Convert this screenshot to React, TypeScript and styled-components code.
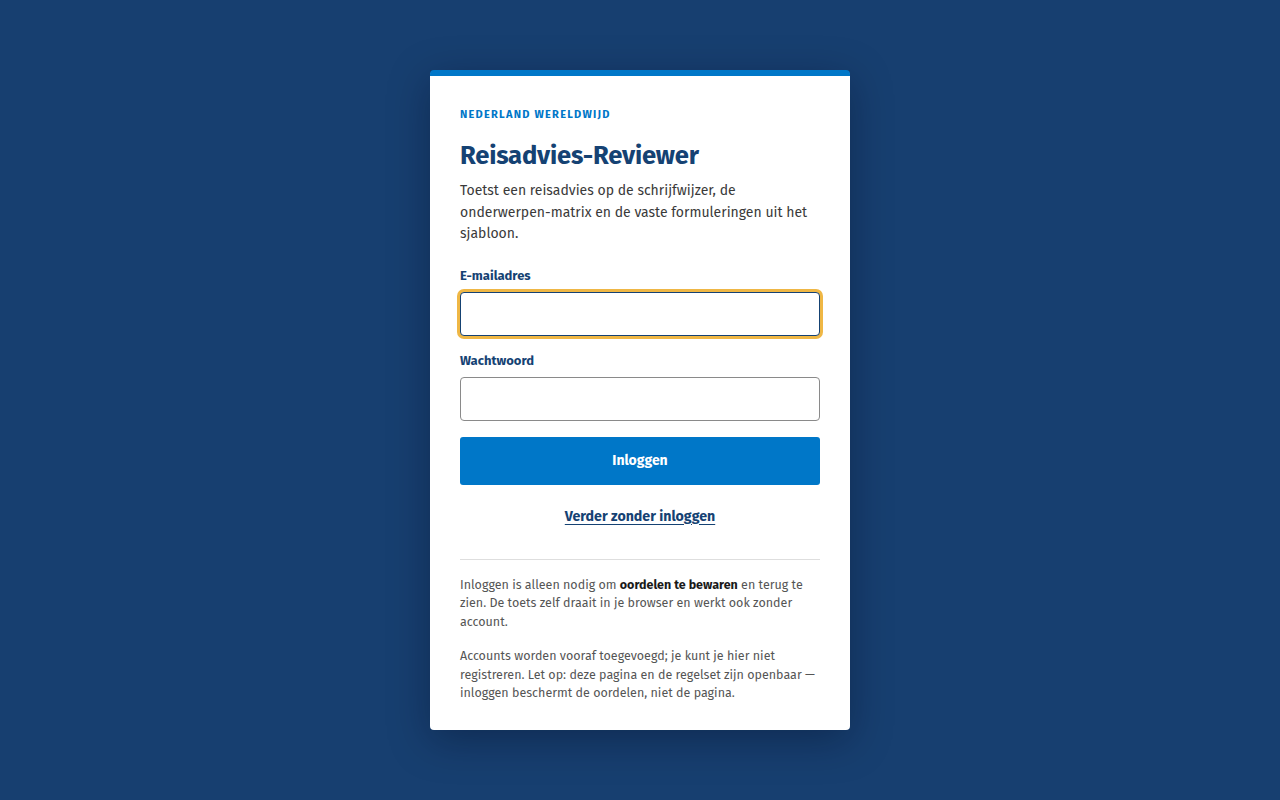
import React from "react";
import styled, { createGlobalStyle } from "styled-components";

const Global = createGlobalStyle`
  html, body { margin: 0; padding: 0; }
  body {
    background: #173f70;
    font-family: "Fira Sans", "Open Sans", "Noto Sans", sans-serif;
    -webkit-font-smoothing: antialiased;
  }
  * { box-sizing: border-box; }
`;

const Page = styled.main`
  min-height: 800px;
  display: flex;
  justify-content: center;
  align-items: flex-start;
  padding-top: 70px;
`;

const Card = styled.section`
  width: 420px;
  background: #fff;
  border-top: 6px solid #0077c8;
  border-radius: 4px;
  padding: 31px 30px 27px;
  box-shadow: 0 10px 40px rgba(0, 10, 30, 0.35);
`;

const Eyebrow = styled.div`
  font-size: 11px;
  font-weight: 700;
  letter-spacing: 1.25px;
  color: #0077c8;
  text-transform: uppercase;
  line-height: 16px;
`;

const Title = styled.h1`
  margin: 18px 0 9px;
  font-size: 25.6px;
  font-weight: 700;
  color: #154273;
  line-height: 30px;
  letter-spacing: -0.2px;
`;

const Lead = styled.p`
  margin: 0 0 22px;
  font-size: 14px;
  line-height: 21.5px;
  color: #3a3a3a;
`;

const NoBreak = styled.span`
  white-space: nowrap;
`;

const Field = styled.div`
  display: flex;
  flex-direction: column;
  margin-bottom: 16px;
`;

const Label = styled.label`
  font-size: 13px;
  font-weight: 700;
  color: #154273;
  line-height: 18px;
  margin-bottom: 7px;
`;

const Input = styled.input<{ $focused?: boolean }>`
  height: 44px;
  width: 100%;
  border-radius: 4px;
  font: inherit;
  font-size: 14px;
  padding: 0 12px;
  background: #fff;
  border: 1px solid ${(p) => (p.$focused ? "#154273" : "#8a8a8a")};
  outline: none;
  box-shadow: ${(p) => (p.$focused ? "0 0 0 3px #efb745" : "none")};
`;

const Button = styled.button`
  height: 48px;
  width: 100%;
  border: none;
  border-radius: 3px;
  background: #0077c8;
  color: #fff;
  font: inherit;
  font-size: 14px;
  font-weight: 700;
  cursor: pointer;
`;

const LinkRow = styled.div`
  display: flex;
  justify-content: center;
  margin-top: 22px;
`;

const TextLink = styled.a`
  font-size: 14.2px;
  font-weight: 700;
  color: #154273;
  text-decoration: underline;
  text-underline-offset: 3px;
  line-height: 20px;
`;

const Divider = styled.hr`
  border: none;
  border-top: 1px solid #dedede;
  margin: 32px 0 16px;
`;

const Note = styled.p`
  margin: 0 0 16px;
  font-size: 12.5px;
  line-height: 18.6px;
  color: #555;
  &:last-child { margin-bottom: 0; }
  strong { color: #1a1a1a; font-weight: 700; }
`;

export default function App() {
  return (
    <>
      <Global />
      <Page>
        <Card>
          <Eyebrow>Nederland Wereldwijd</Eyebrow>
          <Title>Reisadvies-Reviewer</Title>
          <Lead>
            Toetst een reisadvies op de schrijfwijzer, de <NoBreak>onderwerpen-matrix</NoBreak> en de vaste formuleringen uit het sjabloon.
          </Lead>
          <form onSubmit={(e) => e.preventDefault()}>
            <Field>
              <Label htmlFor="email">E-mailadres</Label>
              <Input id="email" type="email" $focused />
            </Field>
            <Field>
              <Label htmlFor="pw">Wachtwoord</Label>
              <Input id="pw" type="password" />
            </Field>
            <Button type="submit">Inloggen</Button>
          </form>
          <LinkRow>
            <TextLink href="#">Verder zonder inloggen</TextLink>
          </LinkRow>
          <Divider />
          <Note>
            Inloggen is alleen nodig om <strong>oordelen te bewaren</strong> en terug te zien. De toets zelf draait in je browser en werkt ook zonder account.
          </Note>
          <Note>
            Accounts worden vooraf toegevoegd; je kunt je hier niet registreren. Let op: deze pagina en de regelset zijn openbaar — inloggen beschermt de oordelen, niet de pagina.
          </Note>
        </Card>
      </Page>
    </>
  );
}
